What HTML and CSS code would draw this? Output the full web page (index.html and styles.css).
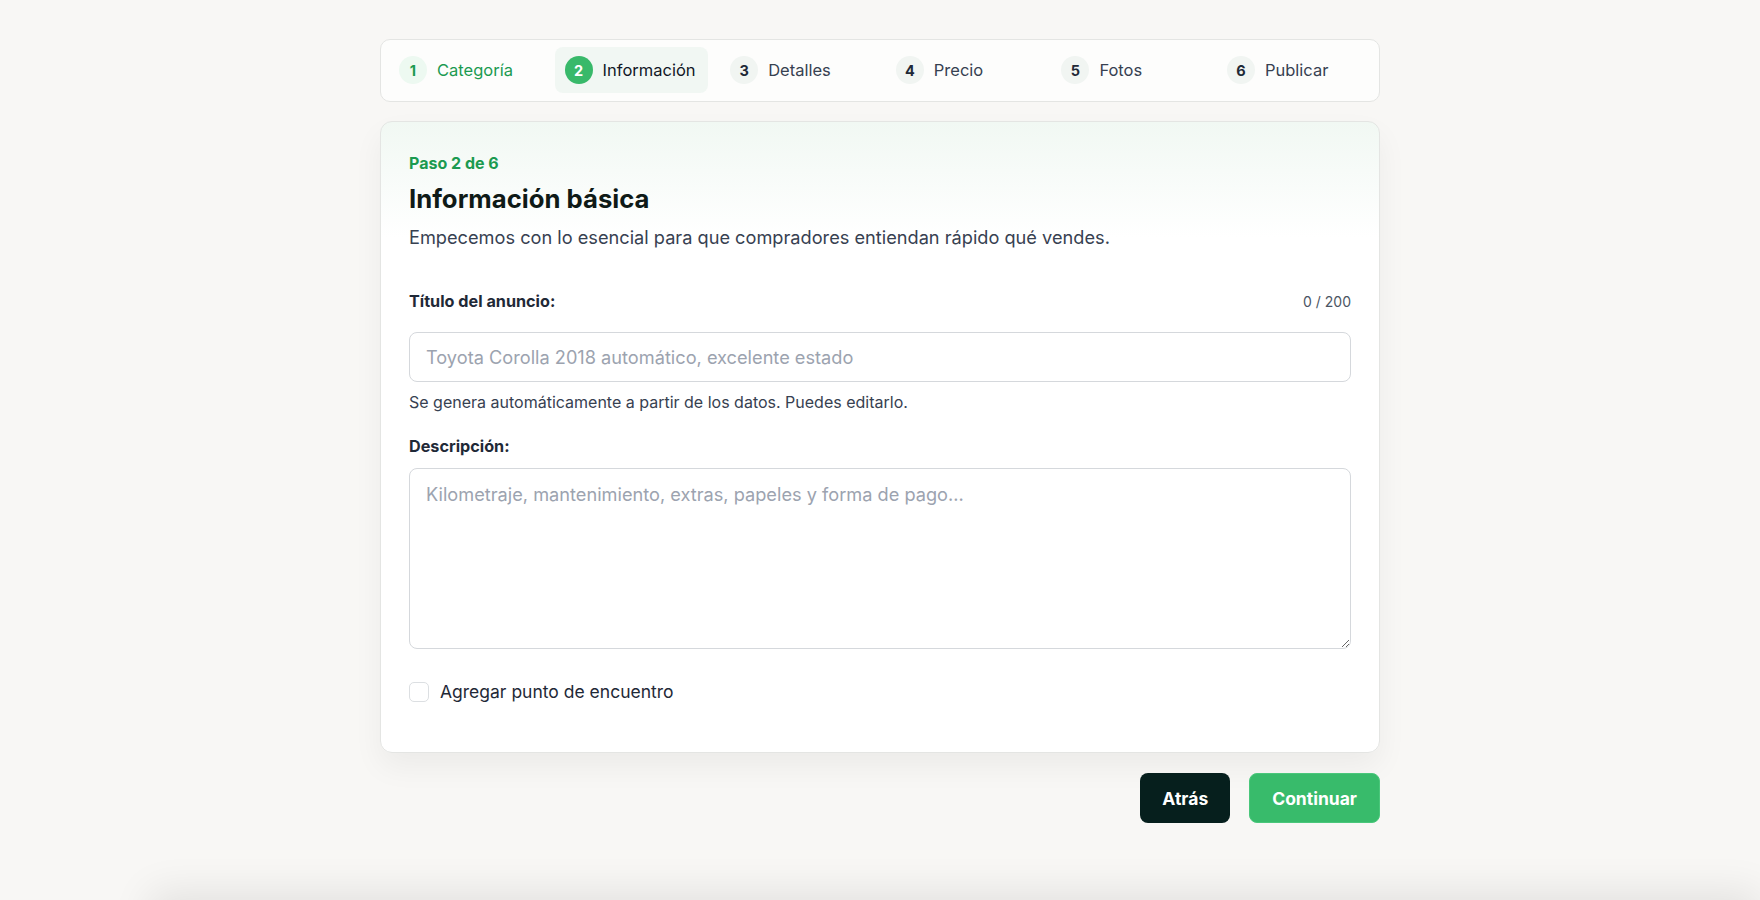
FILE: index.html
```html
<!DOCTYPE html>
<html lang="es">
<head>
  <meta charset="UTF-8" />
  <meta name="viewport" content="width=device-width, initial-scale=1.0"/>
  <title>Publicar anuncio</title>
  <link rel="stylesheet" href="styles.css">
</head>
<body>
  <main class="wizard">
    <nav class="steps">
      <div class="step done"><span class="step-num">1</span><span class="step-label">Categoría</span></div>
      <div class="step active"><span class="step-num">2</span><span class="step-label">Información</span></div>
      <div class="step"><span class="step-num">3</span><span class="step-label">Detalles</span></div>
      <div class="step"><span class="step-num">4</span><span class="step-label">Precio</span></div>
      <div class="step"><span class="step-num">5</span><span class="step-label">Fotos</span></div>
      <div class="step"><span class="step-num">6</span><span class="step-label">Publicar</span></div>
    </nav>

    <form class="card" id="listingForm">
      <header class="card-head">
        <div class="eyebrow">Paso 2 de 6</div>
        <h1>Información básica</h1>
        <p class="lead">Empecemos con lo esencial para que compradores entiendan rápido qué vendes.</p>
      </header>

      <div class="field">
        <div class="field-top">
          <label for="title">Título del anuncio:</label>
          <span class="counter" id="counter">0 / 200</span>
        </div>
        <input type="text" id="title" name="title" maxlength="200" placeholder="Toyota Corolla 2018 automático, excelente estado" />
        <p class="hint">Se genera automáticamente a partir de los datos. Puedes editarlo.</p>
      </div>

      <div class="field">
        <label for="description">Descripción:</label>
        <textarea id="description" name="description" placeholder="Kilometraje, mantenimiento, extras, papeles y forma de pago..."></textarea>
      </div>

      <label class="check">
        <input type="checkbox" name="meeting" />
        <span>Agregar punto de encuentro</span>
      </label>
    </form>

    <div class="actions">
      <button type="button" class="btn btn-dark">Atrás</button>
      <button type="submit" form="listingForm" class="btn btn-green">Continuar</button>
    </div>
  </main>

  <div class="bottom-bar"></div>

  <script>
    const title = document.getElementById('title');
    const counter = document.getElementById('counter');
    title.addEventListener('input', () => {
      counter.textContent = `${title.value.length} / 200`;
    });
    document.getElementById('listingForm').addEventListener('submit', (e) => e.preventDefault());
  </script>
</body>
</html>
```

FILE: styles.css
```css
* {
  box-sizing: border-box;
}

body {
  margin: 0;
  font-family: Inter, "Noto Sans", sans-serif;
  background: #f8f7f5;
  color: #1f2937;
}

.wizard {
  max-width: 1000px;
  margin: 0 auto;
  padding-top: 39px;
}

/* stepper */
.steps {
  display: grid;
  grid-template-columns: repeat(6, 165.6px);
  padding: 7px 0 8px 8px;
  background: #fdfdfc;
  border: 1px solid #e4e5e3;
  border-radius: 10px;
}

.step {
  justify-self: start;
  display: flex;
  align-items: center;
  gap: 10px;
  padding: 9px 12px 9px 10px;
  border-radius: 8px;
  font-size: 16.5px;
  color: #374151;
}

.step-num {
  width: 28px;
  height: 28px;
  border-radius: 50%;
  display: flex;
  align-items: center;
  justify-content: center;
  background: #f1f5f2;
  font-size: 14.5px;
  font-weight: 700;
  color: #1f2937;
}

.step.done .step-label {
  color: #1b9a50;
}

.step.done .step-num {
  background: #edf9f1;
  color: #1b9a50;
}

.step.active {
  background: #f1f7f3;
  color: #111827;
}

.step.active .step-num {
  background: #38b96a;
  color: #fff;
}

/* main card */
.card {
  margin-top: 19px;
  padding: 0 28px 50px;
  background: linear-gradient(180deg, #f1f8f3 0px, #ffffff 115px);
  border: 1px solid #e4e5e3;
  border-radius: 12px;
  box-shadow: 0 14px 30px rgba(0, 0, 0, 0.05);
}

.card-head {
  padding-top: 31px;
}

.eyebrow {
  font-size: 16px;
  font-weight: 700;
  color: #1b9a50;
}

.card-head h1 {
  margin: 10px 0 0;
  font-size: 25.7px;
  font-weight: 700;
  color: #0f1a17;
}

.lead {
  margin: 12px 0 0;
  font-size: 18.2px;
  color: #374151;
}

.field {
  display: flex;
  flex-direction: column;
}

.field:first-of-type {
  margin-top: 43px;
}

.field-top {
  display: flex;
  justify-content: space-between;
  align-items: center;
}

.field label {
  font-size: 16.2px;
  font-weight: 700;
  color: #1f2937;
}

.counter {
  font-size: 14px;
  color: #4b5563;
}

.field input,
.field textarea {
  width: 100%;
  border: 1px solid #d5d8dc;
  border-radius: 8px;
  padding: 0 16px;
  font-family: inherit;
  font-size: 18.2px;
  color: #1f2937;
  background: #fff;
}

.field input {
  height: 50px;
  margin-top: 21px;
}

.field textarea {
  height: 181px;
  margin-top: 12px;
  padding-top: 14px;
  resize: vertical;
}

.field input::placeholder,
.field textarea::placeholder {
  color: #9ca3af;
}

.hint {
  margin: 10px 0 0;
  font-size: 16px;
  color: #374151;
}

.field + .field {
  margin-top: 24px;
}

.check {
  display: flex;
  align-items: center;
  gap: 11px;
  margin-top: 32px;
  font-size: 17.5px;
  color: #1f2937;
  cursor: pointer;
}

.check input {
  appearance: none;
  width: 20px;
  height: 20px;
  margin: 0;
  border: 1px solid #dcdfe2;
  border-radius: 5px;
  background: #fff;
}

/* footer buttons */
.actions {
  display: flex;
  justify-content: flex-end;
  gap: 19px;
  margin-top: 20px;
}

.btn {
  height: 50px;
  padding: 0 22px;
  border: none;
  border-radius: 8px;
  font-family: inherit;
  font-size: 17.5px;
  font-weight: 700;
  color: #fff;
  cursor: pointer;
}

.btn-dark {
  background: #061f1d;
}

.btn-green {
  background: #38bb6b;
  border: 1px solid #4ac77b;
}

.bottom-bar {
  position: fixed;
  top: 100%;
  left: 150px;
  right: 0;
  height: 60px;
  box-shadow: 0 -8px 40px rgba(0, 0, 0, 0.09);
}
```
